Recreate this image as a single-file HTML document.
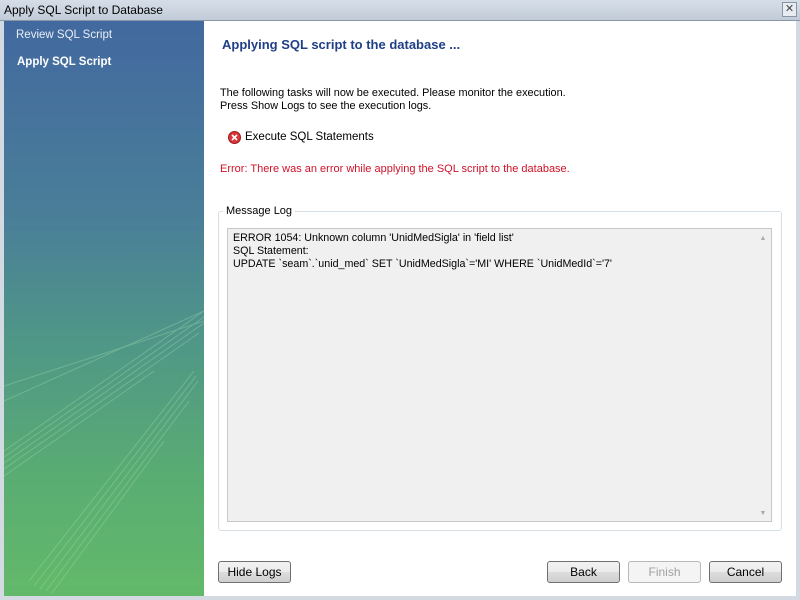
<!DOCTYPE html>
<html><head><meta charset="utf-8"><style>
*{margin:0;padding:0;box-sizing:border-box}
body{width:800px;height:600px;overflow:hidden;background:#fff;font-family:"Liberation Sans",sans-serif;font-size:11px;color:#000;position:relative}
.abs{position:absolute;white-space:nowrap}
#title{left:0;top:0;width:800px;height:21px;background:linear-gradient(#d6dee8,#c2ccd8);border-bottom:1px solid #8a96a6}
#side{left:4px;top:21px;width:200px;height:575px;background:linear-gradient(180deg,#42699f 0%,#4a7f98 35%,#4f9688 55%,#5aad72 80%,#63b96a 100%);overflow:hidden}
.btn{position:absolute;top:561px;height:22px;border:1px solid #707070;border-radius:3px;background:linear-gradient(#f2f2f2,#ebebeb 50%,#dddddd 51%,#cfcfcf);font-size:12px;text-align:center;line-height:20px}
</style></head><body>
<div id="title" class="abs"><span class="abs" style="left:4px;top:3px;font-size:12px">Apply SQL Script to Database</span>
<div class="abs" style="left:782px;top:2px;width:15px;height:15px;border:1px solid #8a96a6;background:#e6ecf2;font-size:11px;line-height:13px;text-align:center;color:#444">✕</div></div>
<div class="abs" style="left:0;top:21px;width:4px;height:579px;background:#d4dae2"></div>
<div class="abs" style="left:796px;top:21px;width:4px;height:579px;background:#d4dae2"></div>
<div class="abs" style="left:0;top:596px;width:800px;height:4px;background:#d4dae2"></div>
<div id="side" class="abs">
<svg width="200" height="575" style="position:absolute;left:0;top:0;opacity:.35">
<g stroke="#a8e0b0" stroke-width="1" fill="none">
<path d="M0 430 L200 290"/><path d="M0 436 L200 296"/><path d="M0 442 L200 302"/><path d="M0 448 L195 312"/><path d="M0 455 L150 350"/>
<path d="M25 560 L190 350"/><path d="M30 565 L192 355"/><path d="M36 568 L194 360"/><path d="M42 570 L185 380"/><path d="M48 572 L160 420"/>
<path d="M0 380 L200 290"/><path d="M0 365 L200 300"/>
</g></svg>
<span class="abs" style="left:12px;top:8px;color:#e8eef6;font-size:11.5px">Review SQL Script</span>
<span class="abs" style="left:13px;top:35px;color:#fff;font-size:11.5px;font-weight:bold">Apply SQL Script</span>
</div>
<span class="abs" style="left:222px;top:37px;color:#1f3f86;font-size:13px;font-weight:bold">Applying SQL script to the database ...</span>
<span class="abs" style="left:220px;top:87px;font-size:10.9px">The following tasks will now be executed. Please monitor the execution.</span>
<span class="abs" style="left:220px;top:100px;font-size:10.9px">Press Show Logs to see the execution logs.</span>
<svg class="abs" style="left:228px;top:131px" width="13" height="13"><circle cx="6.5" cy="6.5" r="6" fill="#d8363a" stroke="#9a1a1a"/><path d="M4 4 L9 9 M9 4 L4 9" stroke="#fff" stroke-width="1.6"/></svg>
<span class="abs" style="left:245px;top:131px;font-size:11.5px">Execute SQL Statements</span>
<span class="abs" style="left:220px;top:163px;color:#d0122a;font-size:11px">Error: There was an error while applying the SQL script to the database.</span>
<div class="abs" style="left:218px;top:211px;width:564px;height:320px;border:1px solid #d5dfe5;border-radius:3px"></div>
<span class="abs" style="left:223px;top:205px;background:#fff;padding:0 3px">Message Log</span>
<div class="abs" style="left:227px;top:228px;width:545px;height:294px;border:1px solid #c8c8c8;background:#f0f0f0"></div>
<div class="abs" style="left:755px;top:229px;width:16px;height:292px;background:#f0f0f0;color:#aaa;font-size:7px;text-align:center"><div style="margin-top:6px">▲</div><div style="position:absolute;bottom:4px;width:16px">▼</div></div>
<span class="abs" style="left:233px;top:232px;font-size:10.7px">ERROR 1054: Unknown column 'UnidMedSigla' in 'field list'</span>
<span class="abs" style="left:233px;top:245px;font-size:10.7px">SQL Statement:</span>
<span class="abs" style="left:233px;top:258px;font-size:10.7px">UPDATE `seam`.`unid_med` SET `UnidMedSigla`='MI' WHERE `UnidMedId`='7'</span>
<div class="btn" style="left:218px;width:73px">Hide Logs</div>
<div class="btn" style="left:547px;width:73px">Back</div>
<div class="btn" style="left:628px;width:73px;border-color:#b8b8b8;background:#f4f4f4;color:#a0a0a0">Finish</div>
<div class="btn" style="left:709px;width:73px">Cancel</div>
</body></html>
